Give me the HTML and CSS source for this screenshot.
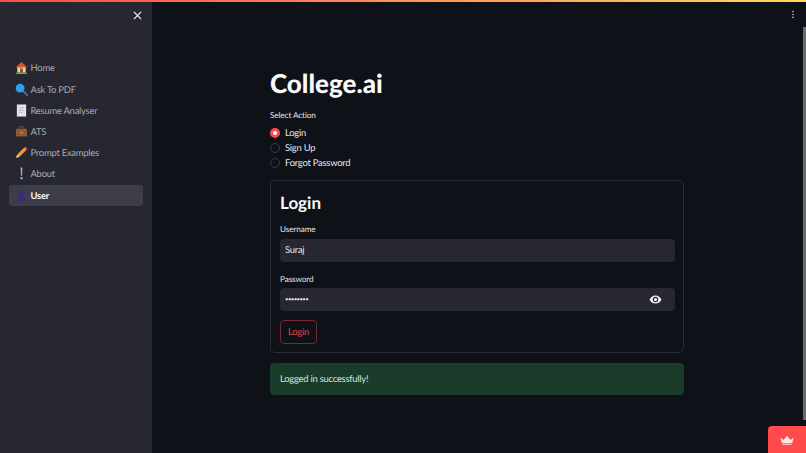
FILE: index.html
```html
<!DOCTYPE html>
<html lang="en">
<head>
<meta charset="utf-8">
<title>College.ai</title>
<link rel="stylesheet" href="styles.css">
</head>
<body>
<div class="topline"></div>
<div class="app">
  <aside class="sidebar">
    <div class="close-row">
      <svg class="close" viewBox="0 0 10 10"><path d="M1 1L9 9M9 1L1 9"/></svg>
    </div>
    <nav class="nav">
      <a class="nav-item">
        <svg class="emoji" viewBox="0 0 14 14"><rect x="2.500" y="6" width="9" height="6.500" fill="#f0cfa0"/><path d="M0.500 7L7 1l6.500 6z" fill="#d9542b"/><rect x="5.500" y="8" width="3" height="4.500" fill="#8a4b2a"/><rect x="1" y="12.500" width="12" height="1.500" fill="#4caf50"/></svg>
        <span>Home</span>
      </a>
      <a class="nav-item">
        <svg class="emoji" viewBox="0 0 14 14"><path d="M8.500 8.500L13 13" stroke="#6a55b0" stroke-width="2.200" stroke-linecap="round"/><circle cx="5.500" cy="5.500" r="4.800" fill="#2f9df0"/></svg>
        <span>Ask To PDF</span>
      </a>
      <a class="nav-item">
        <svg class="emoji" viewBox="0 0 14 14"><rect x="2" y="0.500" width="10" height="13" fill="#e4e4ea"/><path d="M4 4h6M4 6.500h6M4 9h4" stroke="#b8b8c4" stroke-width="1"/></svg>
        <span>Resume Analyser</span>
      </a>
      <a class="nav-item">
        <svg class="emoji" viewBox="0 0 14 14"><rect x="4.500" y="2" width="5" height="3" fill="none" stroke="#6d4a30" stroke-width="1.200"/><rect x="1" y="4" width="12" height="8.500" rx="1" fill="#8a5a35"/><rect x="6" y="7.500" width="2" height="1.500" fill="#e0a040"/></svg>
        <span>ATS</span>
      </a>
      <a class="nav-item">
        <svg class="emoji" viewBox="0 0 14 14"><path d="M2.500 9L10 1.500 12.500 4 5 11.500z" fill="#f59a23"/><path d="M10 1.500l1-1 2.500 2.500-1 1z" fill="#e8487a"/><path d="M2.500 9L5 11.500 1 13z" fill="#f3d2a8"/></svg>
        <span>Prompt Examples</span>
      </a>
      <a class="nav-item">
        <svg class="emoji" viewBox="0 0 14 14"><path d="M6 0.500h2L7.600 9.500H6.400z" fill="#a9aab2"/><circle cx="7" cy="12" r="1.300" fill="#a9aab2"/></svg>
        <span>About</span>
      </a>
      <a class="nav-item active">
        <svg class="emoji" viewBox="0 0 14 14"><circle cx="7" cy="4.500" r="3.500" fill="#3f2a78"/><path d="M2.500 13.500c0-4 2-5.500 4.500-5.500s4.500 1.500 4.500 5.500z" fill="#3f2a78"/></svg>
        <span>User</span>
      </a>
    </nav>
  </aside>
  <main class="main">
    <h1 class="title">College.ai</h1>
    <div class="field-label">Select Action</div>
    <div class="radios">
      <label class="radio"><span class="dot on"></span>Login</label>
      <label class="radio"><span class="dot"></span>Sign Up</label>
      <label class="radio"><span class="dot"></span>Forgot Password</label>
    </div>
    <form class="card">
      <h2 class="card-title">Login</h2>
      <div class="field-label">Username</div>
      <div class="input">Suraj</div>
      <div class="field-label second">Password</div>
      <div class="input password">
        <span class="mask">••••••••</span>
        <svg class="eye" viewBox="0 0 24 24"><path fill-rule="evenodd" d="M12 4.500C7 4.500 2.700 7.600 1 12c1.700 4.400 6 7.500 11 7.500s9.300-3.100 11-7.500c-1.700-4.400-6-7.500-11-7.500zM12 17a5 5 0 1 1 0-10 5 5 0 0 1 0 10zm0-8a3 3 0 1 0 0 6 3 3 0 0 0 0-6z"/></svg>
      </div>
      <div class="button">Login</div>
    </form>
    <div class="alert">Logged in successfully!</div>
  </main>
</div>
<svg class="kebab" viewBox="0 0 4 14"><circle cx="2" cy="2.500" r="1.200"/><circle cx="2" cy="7" r="1.200"/><circle cx="2" cy="11.500" r="1.200"/></svg>
<div class="scrollbar"></div>
<div class="badge">
  <svg class="crown" viewBox="0 0 16 11"><path d="M0.500 2.500L4 5.500 8 0.500l4 5 3.500-3L14 9H2z"/><path d="M2.500 9.800h11L13 11H3z"/></svg>
</div>
</body>
</html>
```
FILE: styles.css
```css
* { box-sizing: border-box; }
html, body { margin: 0; height: 100%; overflow: hidden; }
body {
  background: #0e1117;
  color: #fafafa;
  font-family: Lato, "Noto Sans", sans-serif;
  font-size: 10.5px;
  text-rendering: geometricPrecision;
}
.topline {
  position: absolute; left: 0; top: 0; right: 0; height: 2px;
  background: linear-gradient(90deg, #ff4b4b, #ffd75e);
}
.app { display: flex; height: 453px; }
.sidebar { width: 152px; flex: none; background: #262730; padding: 0 9px; }
.close-row { height: 57.400px; display: flex; justify-content: flex-end; padding: 11px 1px 0 0; }
.close { width: 9px; height: 9px; stroke: #f0f0f2; stroke-width: 1.400; fill: none; }
.nav { display: flex; flex-direction: column; gap: 0.200px; }
.nav-item {
  display: flex; align-items: center; gap: 2.500px;
  height: 21px; padding-left: 6px; border-radius: 3px;
  color: #a9aab2; font-size: 9.400px; letter-spacing: -0.220px; white-space: nowrap;
}
.nav-item span { padding-top: 2px; }
.nav-item.active { background: #3d3e49; color: #fafafa; font-weight: 700; }
.emoji { width: 13px; height: 13px; flex: none; }
.main { width: 414px; margin-left: 118px; padding-top: 66px; }
.title { margin: 0; font-size: 26px; line-height: 35px; font-weight: 900; }
.field-label { margin-top: 7.500px; font-size: 8.200px; line-height: 13px; color: #e6e6ea; letter-spacing: -0.100px; }
.radios { display: flex; flex-direction: column; gap: 0; margin-top: 4px; }
.radio { display: flex; align-items: center; gap: 5px; height: 15.200px; font-size: 9.400px; letter-spacing: -0.220px; color: #e8e8ec; }
.dot { width: 10px; height: 10px; border-radius: 50%; border: 1px solid #3b3d47; background: #0e1117; }
.dot.on { border: 3px solid #ff4b4b; background: #fff; }
.card {
  margin-top: 9px; height: 173px; padding: 10px 8px 0 9px;
  border: 1px solid #2a2c35; border-radius: 5px;
}
.card-title { margin: 0; font-size: 17px; line-height: 24px; font-weight: 700; }
.card .field-label { margin-top: 8px; }
.card .field-label.second { margin-top: 11px; }
.input {
  display: flex; align-items: center; justify-content: space-between;
  height: 23px; margin-top: 3px; padding: 0 5px;
  background: #262730; border-radius: 4px; font-size: 9.400px; letter-spacing: -0.220px; color: #e8e8ec;
}
.input.password { margin-top: 2px; }
.mask { font-size: 6px; letter-spacing: -0.600px; }
.eye { width: 13px; height: 13px; fill: #f0f0f2; margin-right: 8px; }
.button {
  display: flex; align-items: center; justify-content: center;
  width: 37px; height: 24px; margin-top: 9px;
  border: 1px solid #7a2732; border-radius: 4px;
  color: #e0404a; font-size: 9.400px; letter-spacing: -0.220px;
}
.alert {
  display: flex; align-items: center;
  height: 32px; margin-top: 10px; padding-left: 10px;
  background: #1b3c2a; border-radius: 4px;
  font-size: 9.400px; letter-spacing: -0.220px; color: #d2e6da;
}
.kebab { position: absolute; left: 791px; top: 10px; width: 4px; height: 9px; fill: #d8d8dc; }
.scrollbar { position: absolute; left: 803px; top: 27px; width: 3px; height: 393px; background: #6b6c70; }
.badge {
  position: absolute; left: 768px; top: 426px; width: 38px; height: 27px;
  background: #ff4b4b; border-top-left-radius: 4px;
  display: flex; justify-content: center; padding-top: 9px;
}
.crown { width: 14px; height: 10px; fill: #fde6e6; }
```
